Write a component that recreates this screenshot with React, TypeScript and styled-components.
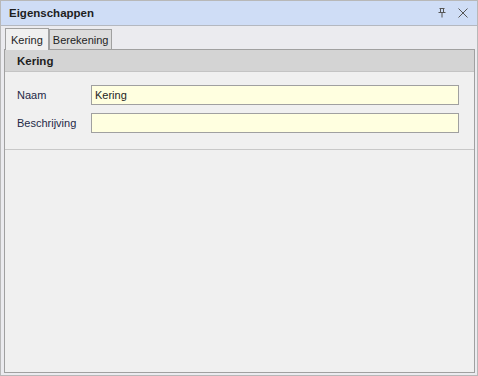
import styled, { createGlobalStyle } from 'styled-components';

const GlobalStyle = createGlobalStyle`
  html, body {
    margin: 0;
    padding: 0;
    background: #f0f0f0;
  }
  * {
    box-sizing: border-box;
  }
`;

const Window = styled.div`
  width: 478px;
  height: 376px;
  display: flex;
  flex-direction: column;
  background: #ebebef;
  border: 1px solid #b8b8b8;
  font-family: "Liberation Sans", Arial, sans-serif;
  font-size: 11px;
  color: #1e1e1e;
`;

const TitleBar = styled.div`
  height: 25px;
  display: flex;
  align-items: center;
  padding: 0 6px 0 8px;
  background: #cfddf6;
  border-bottom: 1px solid #b4b8c0;
`;

const Title = styled.span`
  flex: 1;
  font-weight: 700;
  font-size: 11.5px;
`;

const TitleButton = styled.button`
  width: 16px;
  height: 16px;
  margin-left: 5px;
  padding: 0;
  border: none;
  background: transparent;
  display: flex;
  align-items: center;
  justify-content: center;
  color: #555;
`;

const TabStrip = styled.div`
  height: 23px;
  display: flex;
  align-items: flex-end;
  padding-left: 4px;
`;

const Tab = styled.div<{ $active?: boolean }>`
  height: ${({ $active }) => ($active ? 22 : 20)}px;
  padding: 0 ${({ $active }) => ($active ? 5 : 3)}px;
  display: flex;
  align-items: center;
  background: ${({ $active }) => ($active ? '#f0f0f0' : '#dcdcdc')};
  border: 1px solid #a0a0a0;
  border-bottom: none;
  margin-bottom: ${({ $active }) => ($active ? -1 : 0)}px;
  position: relative;
  z-index: ${({ $active }) => ($active ? 1 : 0)};
`;

const Panel = styled.div`
  flex: 1;
  margin: 0 2px 2px 3px;
  background: #f0f0f0;
  border: 1px solid #a0a0a0;
  display: flex;
  flex-direction: column;
`;

const Group = styled.div`
  border-bottom: 1px solid #c8c8c8;
`;

const GroupHeader = styled.div`
  height: 22px;
  display: flex;
  align-items: center;
  padding-left: 12px;
  background: #d4d4d4;
  border-bottom: 1px solid #c4c4c4;
  font-weight: 700;
  font-size: 11.5px;
`;

const GroupBody = styled.div`
  padding: 13px 15px 16px 12px;
  display: flex;
  flex-direction: column;
  gap: 8px;
`;

const FieldRow = styled.div`
  display: flex;
  align-items: center;
`;

const Label = styled.span`
  width: 74px;
  flex-shrink: 0;
  color: #1e2846;
`;

const Input = styled.input`
  flex: 1;
  height: 20px;
  padding: 0 3px;
  background: #ffffe0;
  border: 1px solid #a0a0a0;
  font-family: inherit;
  font-size: 11px;
  color: #1e1e1e;
  outline: none;
`;

function PinIcon() {
  return (
    <svg width="10" height="10" viewBox="0 0 10 10" fill="none" stroke="#555" strokeWidth="1">
      <path d="M2.5 0.5h5M3.5 0.5v4M6.5 0.5v4M1.5 4.5h7M5 4.5v5" />
    </svg>
  );
}

function CloseIcon() {
  return (
    <svg width="10" height="10" viewBox="0 0 10 10" fill="none" stroke="#555" strokeWidth="1">
      <path d="M0.5 0.5l9 9M9.5 0.5l-9 9" />
    </svg>
  );
}

export default function App() {
  return (
    <>
      <GlobalStyle />
      <Window>
        <TitleBar>
          <Title>Eigenschappen</Title>
          <TitleButton aria-label="Vastzetten"><PinIcon /></TitleButton>
          <TitleButton aria-label="Sluiten"><CloseIcon /></TitleButton>
        </TitleBar>
        <TabStrip>
          <Tab $active>Kering</Tab>
          <Tab>Berekening</Tab>
        </TabStrip>
        <Panel>
          <Group>
            <GroupHeader>Kering</GroupHeader>
            <GroupBody>
              <FieldRow>
                <Label>Naam</Label>
                <Input defaultValue="Kering" />
              </FieldRow>
              <FieldRow>
                <Label>Beschrijving</Label>
                <Input defaultValue="" />
              </FieldRow>
            </GroupBody>
          </Group>
        </Panel>
      </Window>
    </>
  );
}
